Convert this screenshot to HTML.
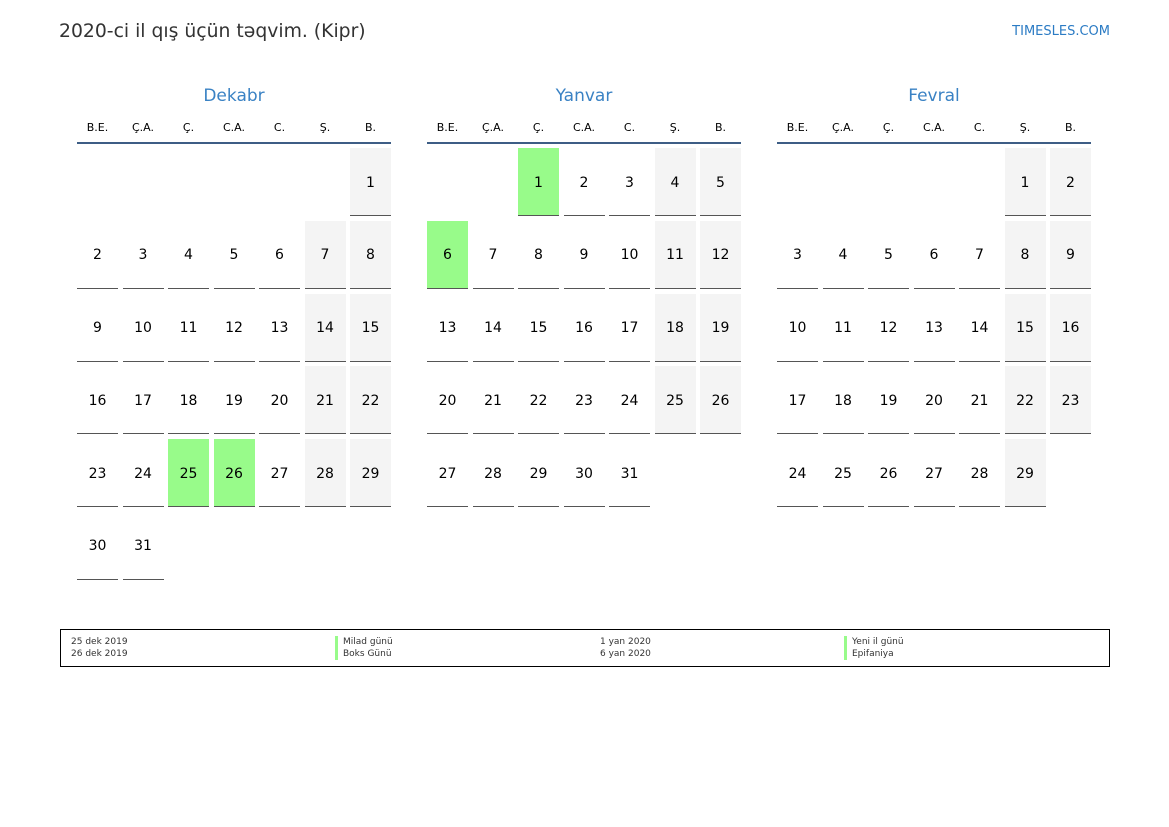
<!DOCTYPE html>
<html><head><meta charset="utf-8"><style>
*{margin:0;padding:0;box-sizing:border-box}
body{width:1169px;height:827px;background:#fff;font-family:"DejaVu Sans","Liberation Sans",sans-serif;position:relative;overflow:hidden;color:#000}
.title{position:absolute;left:59px;top:21px;font-size:18.8px;color:#333}
.site{position:absolute;right:59px;top:24px;font-size:13px;color:#2b7bc4}
.m{position:absolute;top:85px;width:314px}
.mn{text-align:center;font-size:17px;color:#3a82c4;height:22px;line-height:22px}
.hd{display:grid;grid-template-columns:repeat(7,41px);column-gap:4.5px;margin-top:12px;padding-top:1px;height:25px;border-bottom:2px solid #3d5d85;font-size:11px;text-align:center;line-height:16px}
.g{display:grid;grid-template-columns:repeat(7,41px);grid-auto-rows:68px;column-gap:4.5px;row-gap:4.8px;margin-top:4px}
.g div{border-bottom:1px solid #555;display:flex;align-items:center;justify-content:center;font-size:14px;padding-top:2px}
.g div.e{border:none}
.g div.w{background:#f4f4f4}
.g div.h{background:#98fb8a}
.leg{position:absolute;left:60px;top:629px;width:1050px;height:38px;border:1px solid #000;font-size:9px;color:#333;line-height:12px}
.leg span{position:absolute;top:6px}
.bar{border-left:3px solid #98fb8a;padding-left:5px}
</style></head><body>
<div class="title">2020-ci il qış üçün təqvim. (Kipr)</div>
<div class="site">TIMESLES.COM</div>

<div class="m" style="left:77px">
<div class="mn">Dekabr</div>
<div class="hd"><span>B.E.</span><span>Ç.A.</span><span>Ç.</span><span>C.A.</span><span>C.</span><span>Ş.</span><span>B.</span></div>
<div class="g">
<div class="e"></div><div class="e"></div><div class="e"></div><div class="e"></div><div class="e"></div><div class="e"></div><div class="w">1</div>
<div>2</div><div>3</div><div>4</div><div>5</div><div>6</div><div class="w">7</div><div class="w">8</div>
<div>9</div><div>10</div><div>11</div><div>12</div><div>13</div><div class="w">14</div><div class="w">15</div>
<div>16</div><div>17</div><div>18</div><div>19</div><div>20</div><div class="w">21</div><div class="w">22</div>
<div>23</div><div>24</div><div class="h">25</div><div class="h">26</div><div>27</div><div class="w">28</div><div class="w">29</div>
<div>30</div><div>31</div>
</div></div>

<div class="m" style="left:427px">
<div class="mn">Yanvar</div>
<div class="hd"><span>B.E.</span><span>Ç.A.</span><span>Ç.</span><span>C.A.</span><span>C.</span><span>Ş.</span><span>B.</span></div>
<div class="g">
<div class="e"></div><div class="e"></div><div class="h">1</div><div>2</div><div>3</div><div class="w">4</div><div class="w">5</div>
<div class="h">6</div><div>7</div><div>8</div><div>9</div><div>10</div><div class="w">11</div><div class="w">12</div>
<div>13</div><div>14</div><div>15</div><div>16</div><div>17</div><div class="w">18</div><div class="w">19</div>
<div>20</div><div>21</div><div>22</div><div>23</div><div>24</div><div class="w">25</div><div class="w">26</div>
<div>27</div><div>28</div><div>29</div><div>30</div><div>31</div>
</div></div>

<div class="m" style="left:777px">
<div class="mn">Fevral</div>
<div class="hd"><span>B.E.</span><span>Ç.A.</span><span>Ç.</span><span>C.A.</span><span>C.</span><span>Ş.</span><span>B.</span></div>
<div class="g">
<div class="e"></div><div class="e"></div><div class="e"></div><div class="e"></div><div class="e"></div><div class="w">1</div><div class="w">2</div>
<div>3</div><div>4</div><div>5</div><div>6</div><div>7</div><div class="w">8</div><div class="w">9</div>
<div>10</div><div>11</div><div>12</div><div>13</div><div>14</div><div class="w">15</div><div class="w">16</div>
<div>17</div><div>18</div><div>19</div><div>20</div><div>21</div><div class="w">22</div><div class="w">23</div>
<div>24</div><div>25</div><div>26</div><div>27</div><div>28</div><div class="w">29</div>
</div></div>

<div class="leg">
<span style="left:10px">25 dek 2019<br>26 dek 2019</span>
<span class="bar" style="left:274px">Milad günü<br>Boks Günü</span>
<span style="left:539px">1 yan 2020<br>6 yan 2020</span>
<span class="bar" style="left:783px">Yeni il günü<br>Epifaniya</span>
</div>
</body></html>
